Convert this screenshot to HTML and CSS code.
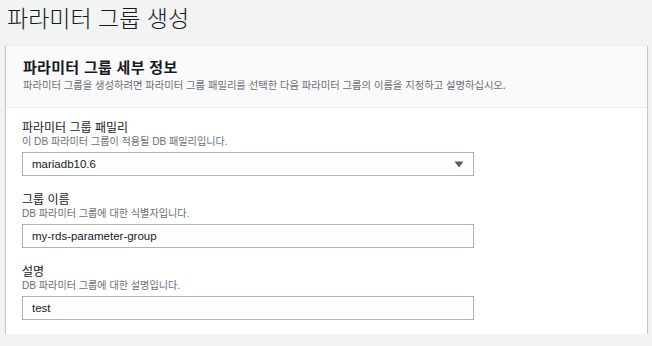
FILE: index.html
```html
<!DOCTYPE html>
<html lang="ko">
<head>
<meta charset="utf-8">
<link rel="stylesheet" href="styles.css">
</head>
<body>
<div class="page">
  <h1 class="page-title">파라미터 그룹 생성</h1>
  <section class="card">
    <header class="card-header">
      <h2 class="card-title">파라미터 그룹 세부 정보</h2>
      <p class="card-desc">파라미터 그룹을 생성하려면 파라미터 그룹 패밀리를 선택한 다음 파라미터 그룹의 이름을 지정하고 설명하십시오.</p>
    </header>
    <div class="card-body">
      <div class="field">
        <div class="label">파라미터 그룹 패밀리</div>
        <div class="hint">이 DB 파라미터 그룹이 적용될 DB 패밀리입니다.</div>
        <div class="control select">
          <span class="value">mariadb10.6</span>
          <svg class="caret" width="10" height="7" viewBox="0 0 10 7"><path d="M0.5 0.5 H9.5 L5 6.5 Z" fill="#545b64"/></svg>
        </div>
      </div>
      <div class="field">
        <div class="label">그룹 이름</div>
        <div class="hint">DB 파라미터 그룹에 대한 식별자입니다.</div>
        <div class="control"><span class="value">my-rds-parameter-group</span></div>
      </div>
      <div class="field">
        <div class="label">설명</div>
        <div class="hint">DB 파라미터 그룹에 대한 설명입니다.</div>
        <div class="control"><span class="value">test</span></div>
      </div>
    </div>
  </section>
</div>
</body>
</html>
```
FILE: styles.css
```css
html, body {
  margin: 0;
  padding: 0;
  background: #f2f3f3;
}
body {
  font-family: "Noto Sans CJK KR", "Noto Sans", sans-serif;
  color: #16191f;
}
.page {
  padding: 3px 5px 0 6px;
}
.page-title {
  margin: 0 0 14px 1px;
  font-size: 23px;
  line-height: 28px;
  font-weight: 300;
  color: #16191f;
}
.card {
  background: #fff;
  border-top: 1px solid #eaeded;
  box-shadow: 0 1px 1px 0 rgba(0, 28, 36, 0.3), 1px 1px 1px 0 rgba(0, 28, 36, 0.15), -1px 1px 1px 0 rgba(0, 28, 36, 0.15);
}
.card-header {
  background: #fafafa;
  border-bottom: 1px solid #eaeded;
  padding: 12px 16px 15px 17px;
}
.card-title {
  margin: 0;
  font-size: 15px;
  line-height: 18px;
  font-weight: 700;
  letter-spacing: 0.3px;
}
.card-desc {
  margin: 2px 0 0;
  font-size: 10.3px;
  line-height: 14px;
  color: #687078;
}
.card-body {
  padding: 13px 16px 14px 16px;
  display: flex;
  flex-direction: column;
  gap: 17px;
}
.field {
  display: flex;
  flex-direction: column;
  width: 452px;
}
.label,
.hint {
  font-family: "Liberation Sans", "Noto Sans CJK KR", sans-serif;
}
.label {
  font-size: 12px;
  line-height: 14px;
  color: #16191f;
}
.hint {
  font-size: 10.1px;
  line-height: 14px;
  color: #687078;
}
.control {
  margin-top: 3px;
  height: 24px;
  box-sizing: border-box;
  border: 1px solid #aab7b8;
  background: #fff;
  display: flex;
  align-items: center;
  justify-content: space-between;
  padding: 0 9px 0 9px;
}
.value {
  font-family: "Liberation Sans", Arial, sans-serif;
  font-size: 11.5px;
  color: #16191f;
}
.caret {
  display: block;
}
```
